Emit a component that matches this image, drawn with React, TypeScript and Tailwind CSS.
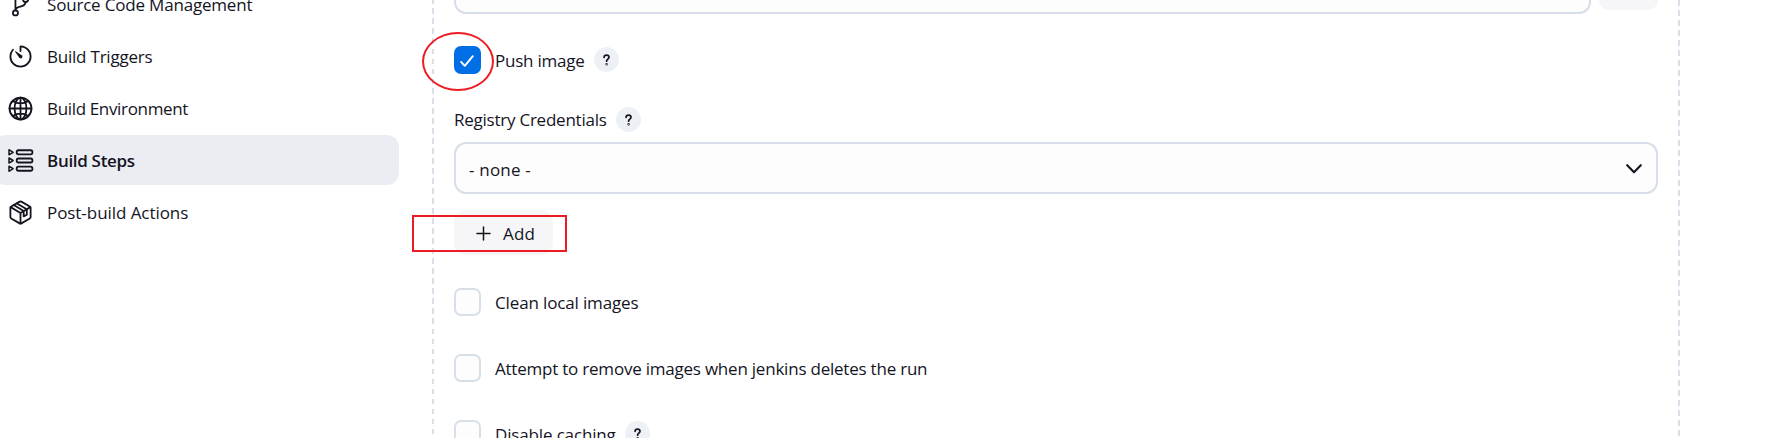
import React from 'react';

type IconProps = { children: React.ReactNode };

function Icon({ children }: IconProps) {
  return (
    <svg
      viewBox="0 0 512 512"
      className="size-[27px] shrink-0"
      fill="none"
      stroke="currentColor"
      strokeWidth="34"
      strokeLinecap="round"
      strokeLinejoin="round"
    >
      {children}
    </svg>
  );
}

const BranchIcon = () => (
  <Icon>
    <circle cx="160" cy="96" r="48" />
    <circle cx="160" cy="416" r="48" />
    <circle cx="352" cy="160" r="48" />
    <path d="M160 368V144M352 208c0 128-192 48-192 160" />
  </Icon>
);

const TimerIcon = () => (
  <Icon>
    <path d="M112.91 128A191.85 191.85 0 0064 254c-1.18 106.35 85.65 193.8 192 194 106.2.2 192-85.83 192-192 0-104.54-83.55-189.61-187.5-192a4.36 4.36 0 00-4.5 4.37V152" />
    <path
      d="M233.38 278.63l-79-113a8.13 8.13 0 0111.32-11.32l113 79a32.5 32.5 0 01-37.25 53.26 33.21 33.21 0 01-8.07-7.94z"
      fill="currentColor"
      stroke="none"
    />
  </Icon>
);

const GlobeIcon = () => (
  <Icon>
    <path d="M256 48C141.13 48 48 141.13 48 256s93.13 208 208 208 208-93.13 208-208S370.87 48 256 48z" />
    <path d="M256 48c-58.07 0-112.67 93.13-112.67 208S197.93 464 256 464s112.67-93.13 112.67-208S314.07 48 256 48z" />
    <path d="M117.33 117.33c38.24 27.15 86.38 43.34 138.67 43.34s100.43-16.19 138.67-43.34M394.67 394.67c-38.24-27.15-86.38-43.34-138.67-43.34s-100.43 16.19-138.67 43.34M256 48v416M464 256H48" />
  </Icon>
);

const StepsIcon = () => (
  <Icon>
    <rect x="184" y="62" width="298" height="76" rx="34" />
    <rect x="184" y="218" width="298" height="76" rx="34" />
    <rect x="184" y="374" width="298" height="76" rx="34" />
    <path strokeWidth="28" d="M38 52v96l78-48zM38 208v96l78-48zM38 364v96l78-48z" />
  </Icon>
);

const PackageIcon = () => (
  <Icon>
    <path d="M448 341.37V170.61A32 32 0 00432.11 143l-152-88.46a47.94 47.94 0 00-48.24 0L79.89 143A32 32 0 0064 170.61v170.76A32 32 0 0079.89 369l152 88.46a48 48 0 0048.24 0l152-88.46A32 32 0 00448 341.37z" />
    <path d="M69 153.99l187 110 187-110M256 463.99v-200" />
    <path d="M127 115l189 112M187 84l189 112M376 196v100l-60 34v-103" />
  </Icon>
);

const navItems = [
  { label: 'Source Code Management', icon: <BranchIcon />, active: false, text: 'tracking-[-0.19px]' },
  { label: 'Build Triggers', icon: <TimerIcon />, active: false, text: 'tracking-[-0.22px]' },
  { label: 'Build Environment', icon: <GlobeIcon />, active: false, text: 'tracking-[-0.34px]' },
  { label: 'Build Steps', icon: <StepsIcon />, active: true, text: 'tracking-[-0.31px]' },
  { label: 'Post-build Actions', icon: <PackageIcon />, active: false, text: 'tracking-[-0.06px]' },
];

function Help() {
  return (
    <span className="flex size-[25px] shrink-0 items-center justify-center rounded-full bg-[#edf1f5] text-[#14141f]">
      <svg viewBox="0 0 10 14" className="h-3 w-[9px]" fill="none" stroke="currentColor" strokeWidth="2" strokeLinecap="round" strokeLinejoin="round">
        <path d="M2.2 3.9C2.2 2.2 3.4 1.3 5 1.3s2.9 1 2.9 2.5c0 2-2.8 2.3-2.8 4.6" />
        <circle cx="5.1" cy="12" r="0.4" />
      </svg>
    </span>
  );
}

function Checkbox({ checked = false }: { checked?: boolean }) {
  return checked ? (
    <span className="flex h-7 w-[27px] shrink-0 items-center justify-center rounded-[7px] bg-[#006fe6] text-white">
      <svg viewBox="0 0 14 12" className="mr-px mt-px h-3 w-3.5" fill="none" stroke="currentColor" strokeWidth="1.9" strokeLinecap="round" strokeLinejoin="round">
        <path d="M1.2 7l3.6 3.8L12.8 1.2" />
      </svg>
    </span>
  ) : (
    <span className="h-[27.5px] w-[27px] shrink-0 rounded-[7px] border-2 border-[#d7dfe9] bg-[#fdfdfd]" />
  );
}

type CheckRowProps = { label: string; text: string; checked?: boolean; help?: boolean };

function CheckRow({ label, text, checked, help }: CheckRowProps) {
  return (
    <div className="flex h-7 items-start">
      <Checkbox checked={checked} />
      <span className={`ml-3.5 mt-px leading-7 ${text}`}>{label}</span>
      {help && (
        <span className="ml-[9px] mt-px">
          <Help />
        </span>
      )}
    </div>
  );
}

export default function App() {
  return (
    <div className="relative flex h-[438px] w-[1780px] overflow-hidden bg-white font-['Open_Sans','Noto_Sans',sans-serif] text-[17px] text-[#14141f]">
      <nav className="-ml-1.5 -mt-[21px] flex w-[405px] shrink-0 flex-col gap-0.5">
        {navItems.map((item) => (
          <div
            key={item.label}
            className={
              item.active
                ? 'flex h-[50px] shrink-0 items-center rounded-xl bg-[#ecedf3] pl-[13px] font-semibold'
                : 'flex h-[50px] shrink-0 items-center rounded-xl pl-[13px]'
            }
          >
            {item.icon}
            <span className={`ml-[13px] mt-0.5 ${item.text}`}>{item.label}</span>
          </div>
        ))}
      </nav>

      <main className="ml-[33px] flex h-full w-[1248px] shrink-0">
        <div className="h-full w-0.5 shrink-0 bg-[repeating-linear-gradient(to_bottom,#d7dfe9_0px,#d7dfe9_4px,transparent_4px,transparent_8.5px,#d7dfe9_8.5px,#d7dfe9_10px)]" />
        <div className="flex h-full w-[1244px] flex-col px-5">
          <div className="flex h-3.5 shrink-0 gap-2">
            <div className="h-3.5 w-[1137px] rounded-b-xl border-2 border-t-0 border-[#d7dde9] bg-[#fdfdfd]" />
            <div className="h-2.5 w-[59px] rounded-b-xl bg-[#f6f6f9]" />
          </div>
          <div className="mt-8">
            <CheckRow label="Push image" text="tracking-[-0.23px]" checked help />
          </div>
          <div className="mt-[33px] flex h-[25px] shrink-0 items-center">
            <span className="mt-px tracking-[-0.24px]">Registry Credentials</span>
            <span className="ml-[9px]">
              <Help />
            </span>
          </div>
          <div className="mt-2.5 flex h-[52px] shrink-0 items-center justify-between rounded-xl border-2 border-[#d7dde9] bg-[#fdfdfd] pl-[13px] pr-[14px]">
            <span className="mt-1 tracking-[0.2px]">- none -</span>
            <svg viewBox="0 0 16 10" className="mt-0.5 h-2.5 w-4" fill="none" stroke="currentColor" strokeWidth="2.1" strokeLinecap="round" strokeLinejoin="round">
              <path d="M1.2 1.2L8 8.2l6.8-7" />
            </svg>
          </div>
          <button className="mt-4 flex h-[45px] w-[99px] shrink-0 items-center rounded-xl bg-[#f6f6f9] pl-[22px]">
            <svg viewBox="0 0 15 15" className="mt-px size-[15px]" fill="none" stroke="currentColor" strokeWidth="1.5" strokeLinecap="round">
              <path d="M7.5 1v13M1 7.5h13" />
            </svg>
            <span className="ml-3 mt-0.5 tracking-[0.15px]">Add</span>
          </button>
          <div className="mt-[33px] flex flex-col gap-[38px]">
            <CheckRow label="Clean local images" text="tracking-[-0.14px]" />
            <CheckRow label="Attempt to remove images when jenkins deletes the run" text="tracking-[-0.22px]" />
            <CheckRow label="Disable caching" text="tracking-[-0.15px]" help />
          </div>
        </div>
        <div className="h-full w-0.5 shrink-0 bg-[repeating-linear-gradient(to_bottom,#d7dfe9_0px,#d7dfe9_6px,transparent_6px,transparent_10px)]" />
      </main>

      <div className="absolute left-[422px] top-8 h-[59px] w-[72px] rounded-[50%] border-2 border-[#ed1c24]" />
      <div className="absolute left-[412px] top-[215px] h-[37px] w-[155px] border-2 border-[#ed1c24]" />
    </div>
  );
}
